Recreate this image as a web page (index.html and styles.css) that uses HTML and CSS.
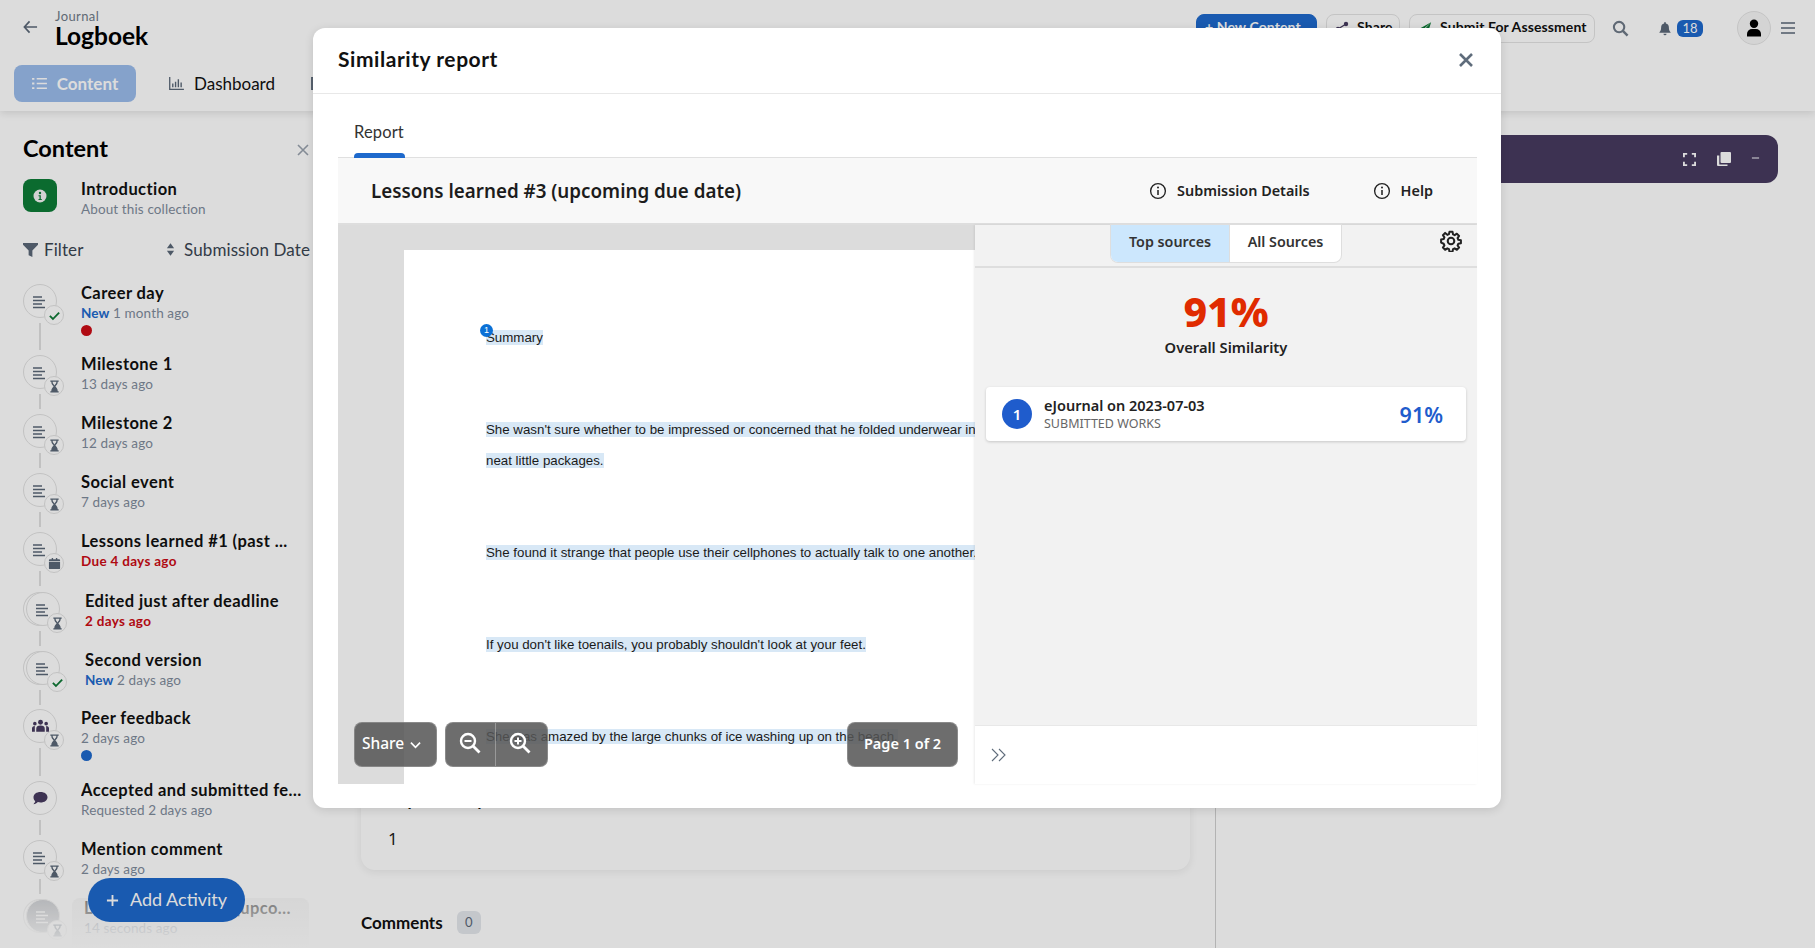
FILE: index.html
```html
<!DOCTYPE html>
<html lang="en">
<head>
<meta charset="utf-8">
<title>Logboek</title>
<link rel="stylesheet" href="styles.css">
</head>
<body>
<svg class="sprite" aria-hidden="true">
  <symbol id="i-lines" viewBox="0 0 14 14"><path d="M1 2h9M1 5.500h12M1 9h9M1 12.500h12" fill="none" stroke="currentColor" stroke-width="1.400"/></symbol>
  <symbol id="i-check" viewBox="0 0 14 14"><path d="M2 7.500l3.300 3.300L12 3.800" fill="none" stroke="currentColor" stroke-width="2"/></symbol>
  <symbol id="i-glass" viewBox="0 0 14 14"><path d="M2.500 .5h9v1.500h-1c0 2.800-1.700 3.800-2.500 5 .8 1.200 2.500 2.200 2.500 5h1v1.500h-9V12h1c0-2.800 1.700-3.800 2.500-5-.8-1.200-2.500-2.200-2.500-5h-1z" fill="currentColor"/><path d="M5 2h4c0 1.800-1.100 2.800-2 3.800C6.100 4.800 5 3.800 5 2z" fill="#fff"/></symbol>
  <symbol id="i-cal" viewBox="0 0 14 14"><path d="M1 5.500h12V12a1 1 0 0 1-1 1H2a1 1 0 0 1-1-1zM2 2.500h2V1h1.500v1.500h3V1H10v1.500h2a1 1 0 0 1 1 1v1H1v-1a1 1 0 0 1 1-1z" fill="currentColor"/></symbol>
  <symbol id="i-info" viewBox="0 0 20 20"><circle cx="10" cy="10" r="8.200" fill="none" stroke="currentColor" stroke-width="1.500"/><circle cx="10" cy="6.200" r="1.100" fill="currentColor"/><path d="M10 9v5.500" stroke="currentColor" stroke-width="1.700"/></symbol>
</svg>

<div class="app">
  <header class="topbar">
    <div class="topbar-row">
      <div class="brand">
        <svg class="back" viewBox="0 0 16 14"><path d="M7 1L1.500 7 7 13M2 7h13" fill="none" stroke="currentColor" stroke-width="1.800"/></svg>
        <div class="brand-text">
          <div class="brand-kicker">Journal</div>
          <div class="brand-name">Logboek</div>
        </div>
      </div>
      <div class="actions">
        <button class="btn btn-primary">+ New Content</button>
        <button class="btn btn-share">
          <svg class="btn-icon" viewBox="0 0 14 14"><circle cx="3" cy="8" r="2.200" fill="#473b5f"/><circle cx="11" cy="3" r="2.200" fill="#473b5f"/><circle cx="11" cy="12" r="2.200" fill="#473b5f"/><path d="M3 8l8-5M3 8l8 4" stroke="#473b5f" stroke-width="1.400"/></svg>
          Share
        </button>
        <button class="btn btn-submit">
          <svg class="btn-icon" viewBox="0 0 16 14"><path d="M15 .5L1 8l4 1.500zM15 .5L6 10v3.500l2.500-3 3 1.200z" fill="#0f7a37"/></svg>
          Submit For Assessment
        </button>
        <svg class="search" viewBox="0 0 18 18"><circle cx="7.500" cy="7.500" r="5.500" fill="none" stroke="currentColor" stroke-width="2.200"/><path d="M11.500 11.500l5 5" stroke="currentColor" stroke-width="2.600"/></svg>
        <div class="notify">
          <svg class="bell" viewBox="0 0 14 16"><path d="M7 .5a1 1 0 0 1 1 1v.6A4.500 4.500 0 0 1 11.500 6.500c0 3.500 1 4.800 2 5.800v.7H.5v-.7c1-1 2-2.300 2-5.800A4.500 4.500 0 0 1 6 2.100v-.6a1 1 0 0 1 1-1zM5.200 14h3.600a1.800 1.800 0 0 1-3.600 0z" fill="currentColor"/></svg>
          <span class="count">18</span>
        </div>
        <div class="avatar">
          <svg viewBox="0 0 16 18"><circle cx="8" cy="4.800" r="4.200" fill="#000"/><path d="M1 17.500v-2.500a5 5 0 0 1 5-5h4a5 5 0 0 1 5 5v2.500z" fill="#000"/></svg>
        </div>
        <svg class="menu" viewBox="0 0 14 14"><path d="M0 2h14M0 7h14M0 12h14" stroke="currentColor" stroke-width="1.600"/></svg>
      </div>
    </div>
    <nav class="tabs">
      <a class="tab tab-active">
        <svg class="tab-icon" viewBox="0 0 16 14"><path d="M5 2h11M5 7h11M5 12h11" stroke="currentColor" stroke-width="1.600"/><path d="M0 1h2.500v2H0zM0 6h2.500v2H0zM0 11h2.500v2H0z" fill="currentColor"/></svg>
        Content
      </a>
      <a class="tab">
        <svg class="tab-icon" viewBox="0 0 16 14"><path d="M.7 0v13.300H16" fill="none" stroke="currentColor" stroke-width="1.400"/><path d="M4 7v4M7 5v6M10 2.500v8.500M13 6v5" stroke="currentColor" stroke-width="1.500"/></svg>
        Dashboard
      </a>
      <a class="tab tab-hidden">
        <svg class="tab-icon" viewBox="0 0 16 14"><path d="M1 0h14v14H1z" fill="none" stroke="currentColor" stroke-width="2"/></svg>
        Settings
      </a>
    </nav>
  </header>

  <div class="workspace">
    <aside class="sidebar">
      <div class="side-head">
        <h2>Content</h2>
        <svg class="side-close" viewBox="0 0 12 12"><path d="M1 1l10 10M11 1L1 11" stroke="currentColor" stroke-width="1.600"/></svg>
      </div>
      <div class="intro">
        <span class="intro-icon">
          <svg viewBox="0 0 14 14"><circle cx="7" cy="7" r="6.500" fill="#f4f4f4"/><circle cx="7" cy="4" r="1.200" fill="#0d7c37"/><path d="M5.500 6.200h2.300v3.700h1v1H5.500v-1h1V7.200h-1z" fill="#0d7c37"/></svg>
        </span>
        <div class="intro-text">
          <div class="title">Introduction</div>
          <div class="sub">About this collection</div>
        </div>
      </div>
      <div class="filters">
        <span class="filter">
          <svg viewBox="0 0 16 16"><path d="M0 1h16v2L10 9v7l-4-2V9L0 3z" fill="currentColor"/></svg>
          Filter
        </span>
        <span class="filter">
          <svg class="sort" viewBox="0 0 10 16"><path d="M5 1l4 5.500H1zM5 15L1 9.500h8z" fill="currentColor"/></svg>
          Submission Date
        </span>
      </div>
      <ul class="items">
        <li class="item">
          <div class="rail"><span class="node"><svg class="node-main"><use href="#i-lines"/></svg><span class="node-badge ok"><svg><use href="#i-check"/></svg></span></span><span class="line"></span></div>
          <div><div class="title">Career day</div><div class="sub"><span class="new">New</span> 1 month ago</div><span class="dot dot-red"></span></div>
        </li>
        <li class="item">
          <div class="rail"><span class="node"><svg class="node-main"><use href="#i-lines"/></svg><span class="node-badge"><svg><use href="#i-glass"/></svg></span></span><span class="line"></span></div>
          <div><div class="title">Milestone 1</div><div class="sub">13 days ago</div></div>
        </li>
        <li class="item">
          <div class="rail"><span class="node"><svg class="node-main"><use href="#i-lines"/></svg><span class="node-badge"><svg><use href="#i-glass"/></svg></span></span><span class="line"></span></div>
          <div><div class="title">Milestone 2</div><div class="sub">12 days ago</div></div>
        </li>
        <li class="item">
          <div class="rail"><span class="node"><svg class="node-main"><use href="#i-lines"/></svg><span class="node-badge"><svg><use href="#i-glass"/></svg></span></span><span class="line"></span></div>
          <div><div class="title">Social event</div><div class="sub">7 days ago</div></div>
        </li>
        <li class="item">
          <div class="rail"><span class="node"><svg class="node-main"><use href="#i-lines"/></svg><span class="node-badge"><svg><use href="#i-cal"/></svg></span></span><span class="line"></span></div>
          <div class="item-body"><div class="title">Lessons learned #1 (past ...</div><div class="sub late">Due 4 days ago</div></div>
        </li>
        <li class="item item-stacked">
          <div class="rail"><span class="node stacked"><svg class="node-main"><use href="#i-lines"/></svg><span class="node-badge"><svg><use href="#i-glass"/></svg></span></span><span class="line"></span></div>
          <div><div class="title">Edited just after deadline</div><div class="sub late">2 days ago</div></div>
        </li>
        <li class="item item-stacked">
          <div class="rail"><span class="node stacked"><svg class="node-main"><use href="#i-lines"/></svg><span class="node-badge ok"><svg><use href="#i-check"/></svg></span></span><span class="line"></span></div>
          <div><div class="title">Second version</div><div class="sub"><span class="new">New</span> 2 days ago</div></div>
        </li>
        <li class="item">
          <div class="rail"><span class="node"><svg class="node-main node-purple" viewBox="0 0 18 14"><circle cx="9" cy="3" r="2.600" fill="currentColor"/><circle cx="3" cy="4.500" r="1.900" fill="currentColor"/><circle cx="15" cy="4.500" r="1.900" fill="currentColor"/><path d="M4.500 13V10a4.500 3.500 0 0 1 9 0v3zM0 11V9.500c0-1.500 1-2.500 3-2.500v6H0zM18 11V9.500C18 8 17 7 15 7v6h3z" fill="currentColor"/></svg><span class="node-badge"><svg><use href="#i-glass"/></svg></span></span><span class="line"></span></div>
          <div><div class="title">Peer feedback</div><div class="sub">2 days ago</div><span class="dot dot-blue"></span></div>
        </li>
        <li class="item">
          <div class="rail"><span class="node"><svg class="node-main node-purple" viewBox="0 0 18 16"><path d="M9 1c4.700 0 8 2.500 8 6s-3.300 6-8 6c-1 0-2-.1-3-.4C4.800 13.800 3 15 1 15c1-1 1.800-2.200 2-3.500C1.700 10.400 1 8.800 1 7c0-3.500 3.300-6 8-6z" fill="currentColor"/></svg></span><span class="line"></span></div>
          <div class="item-body"><div class="title">Accepted and submitted feedback</div><div class="sub">Requested 2 days ago</div></div>
        </li>
        <li class="item">
          <div class="rail"><span class="node"><svg class="node-main"><use href="#i-lines"/></svg><span class="node-badge"><svg><use href="#i-glass"/></svg></span></span><span class="line"></span></div>
          <div><div class="title">Mention comment</div><div class="sub">2 days ago</div></div>
        </li>
        <li class="item item-current">
          <div class="rail"><span class="node node-current stacked"><svg class="node-main"><use href="#i-lines"/></svg><span class="node-badge"><svg><use href="#i-glass"/></svg></span></span></div>
          <div class="item-body"><div class="title">Lessons learned #3 (upcoming due date)</div><div class="sub">14 seconds ago</div></div>
        </li>
      </ul>
      <div class="fade"></div>
      <button class="add-activity"><svg viewBox="0 0 14 14"><path d="M7 1v12M1 7h12" stroke="currentColor" stroke-width="2"/></svg><span class="add-label">Add Activity</span></button>
    </aside>

    <main class="main">
      <section class="card">
        <div class="card-label">Repeat entry</div>
        <div class="card-value">1</div>
      </section>
      <div class="comments">Comments <span class="comments-count">0</span></div>
    </main>

    <aside class="right">
      <div class="purple-bar">
        <svg class="bar-icon" viewBox="0 0 14 14"><path d="M1 4.500V1h3.500M9.500 1H13v3.500M13 9.500V13H9.500M4.500 13H1V9.500" fill="none" stroke="currentColor" stroke-width="2"/></svg>
        <svg class="bar-icon bar-copy" viewBox="0 0 16 16"><path d="M5.500 1H14a1 1 0 0 1 1 1v9a1 1 0 0 1-1 1H5.500a1 1 0 0 1-1-1V2a1 1 0 0 1 1-1z" fill="currentColor"/><path d="M1 4.500h2.300V13.500h8.200V15H2a1 1 0 0 1-1-1z" fill="currentColor"/></svg>
        <svg class="bar-icon bar-minus" viewBox="0 0 10 4"><path d="M1 2h8" stroke="currentColor" stroke-width="2"/></svg>
      </div>
    </aside>
  </div>
</div>

<div class="overlay"></div>

<div class="modal">
  <div class="modal-head">
    <h1>Similarity report</h1>
    <svg class="modal-close" viewBox="0 0 16 16"><path d="M2 2l12 12M14 2L2 14" stroke="currentColor" stroke-width="2.600"/></svg>
  </div>
  <div class="modal-body">
    <div class="modal-tabs"><span class="modal-tab">Report</span></div>
    <div class="report-head">
      <div class="report-title">Lessons learned #3 (upcoming due date)</div>
      <div class="report-links">
        <span class="report-link"><svg><use href="#i-info"/></svg>Submission Details</span>
        <span class="report-link"><svg><use href="#i-info"/></svg>Help</span>
      </div>
    </div>
    <div class="report">
      <div class="viewer">
        <div class="page">
          <p><span class="marker">1</span><span class="hl">Summary</span></p>
          <p><span class="hl">She wasn't sure whether to be impressed or concerned that he folded underwear in</span><br><span class="hl">neat little packages.</span></p>
          <p><span class="hl">She found it strange that people use their cellphones to actually talk to one another.</span></p>
          <p><span class="hl">If you don't like toenails, you probably shouldn't look at your feet.</span></p>
          <p><span class="hl">She was amazed by the large chunks of ice washing up on the beach.</span></p>
        </div>
        <div class="viewer-tools">
          <div class="tool-group">
            <span class="tool tool-share"><span class="tool-text">Share</span>
              <svg viewBox="0 0 12 8"><path d="M1 1.500l5 5 5-5" fill="none" stroke="currentColor" stroke-width="1.800"/></svg>
            </span>
            <span class="tool tool-zoom">
              <span class="zoom-part"><svg viewBox="0 0 22 22"><circle cx="9" cy="9" r="7" fill="none" stroke="currentColor" stroke-width="2.400"/><path d="M14 14l6.500 6.500" stroke="currentColor" stroke-width="2.800"/><path d="M5.500 9h7" stroke="currentColor" stroke-width="2"/></svg></span>
              <span class="zoom-part zoom-split"><svg viewBox="0 0 22 22"><circle cx="9" cy="9" r="7" fill="none" stroke="currentColor" stroke-width="2.400"/><path d="M14 14l6.500 6.500" stroke="currentColor" stroke-width="2.800"/><path d="M5.500 9h7M9 5.500v7" stroke="currentColor" stroke-width="2"/></svg></span>
            </span>
          </div>
          <span class="tool tool-page"><span class="tool-text">Page 1 of 2</span></span>
        </div>
      </div>
      <div class="sources">
        <div class="sources-top">
          <div class="seg">
            <span class="seg-item seg-on">Top sources</span>
            <span class="seg-item">All Sources</span>
          </div>
          <svg class="gear" viewBox="0 0 24 24"><path d="M10.300 2h3.400l.5 2.800 1.800.8 2.400-1.600 2.400 2.400-1.600 2.400.8 1.800 2.800.5v3.400l-2.800.5-.8 1.800 1.600 2.400-2.400 2.400-2.400-1.600-1.800.8-.5 2.800h-3.400l-.5-2.800-1.800-.8-2.400 1.600-2.400-2.400 1.600-2.400-.8-1.800L1.200 13.700v-3.400L4 9.800l.8-1.800-1.600-2.400 2.400-2.400L8 5.300l1.800-.8z" fill="none" stroke="currentColor" stroke-width="2.200" stroke-linejoin="round"/><circle cx="12" cy="12" r="3.600" fill="none" stroke="currentColor" stroke-width="2.200"/></svg>
        </div>
        <div class="sources-main">
          <div class="score">91%</div>
          <div class="score-label">Overall Similarity</div>
          <div class="source-card">
            <span class="source-num">1</span>
            <div class="source-text">
              <div class="source-name">eJournal on 2023-07-03</div>
              <div class="source-type">SUBMITTED WORKS</div>
            </div>
            <span class="source-pct">91%</span>
          </div>
        </div>
        <div class="sources-foot">
          <svg viewBox="0 0 16 14"><path d="M1 1l6 6-6 6M8 1l6 6-6 6" fill="none" stroke="currentColor" stroke-width="1.100"/></svg>
        </div>
      </div>
    </div>
  </div>
</div>
</body>
</html>
```

FILE: styles.css
```css
* { box-sizing: border-box; }
html, body { margin: 0; height: 948px; overflow: hidden; }
body { background: #fff; color: #111; font-family: "Lato", "Noto Sans", sans-serif; position: relative; }
.sprite { display: none; }
svg { display: block; flex: none; }
h1, h2, p, ul { margin: 0; padding: 0; }
button { font: inherit; }

.app { display: flex; flex-direction: column; height: 948px; }

/* Top bar */
.topbar { height: 111px; flex: none; box-shadow: 0 2px 8px rgba(0,0,0,.12); position: relative; z-index: 1; background: #fff; }
.topbar-row { display: flex; justify-content: space-between; align-items: flex-start; height: 65px; padding-left: 23px; padding-right: 20px; }
.brand { display: flex; align-items: center; gap: 17px; padding-top: 8px; }
.back { width: 15px; height: 14px; color: #5b6878; margin-top: -3px; }
.brand-kicker { font-size: 13px; line-height: 16px; color: #6f7a88; letter-spacing: .4px; }
.brand-name { font-size: 24.500px; line-height: 24px; font-weight: 700; color: #000; }
.actions { display: flex; align-items: center; padding-top: 11px; }
.btn { height: 29px; padding: 0 8px 3px; display: flex; align-items: center; gap: 8px; border: 1px solid #e4e4e4; border-radius: 8px; background: #fff; font-size: 14px; font-weight: 700; color: #111; margin-right: 9px; letter-spacing: .1px; white-space: nowrap; }
.btn-primary { background: #1e69cc; border-color: #1e69cc; color: #fff; width: 121px; }
.btn-share { width: 74px; }
.btn-submit { width: 186px; }
.btn-icon { width: 14px; height: 14px; margin-top: 3px; }
.search { width: 17px; height: 17px; color: #6f7a88; margin-left: 8px; }
.notify { display: flex; align-items: center; gap: 6px; margin-left: 30px; }
.bell { width: 12px; height: 15px; color: #5b6878; }
.count { background: #1e69cc; color: #fff; font-size: 13px; line-height: 17px; width: 26px; text-align: center; border-radius: 6px; }
.avatar { width: 34px; height: 34px; border-radius: 50%; border: 1px solid #e4e4e4; display: flex; align-items: center; justify-content: center; margin-left: 34px; background: #f6f6f6; }
.avatar svg { width: 16px; height: 18px; }
.menu { width: 14px; height: 14px; color: #5b6878; margin-left: 10px; }

.tabs { display: flex; padding-left: 14px; gap: 33px; }
.tab { display: flex; align-items: center; gap: 10px; height: 37px; font-size: 17px; color: #111; }
.tab-active { width: 122px; justify-content: center; background: #9bbcec; color: #fff; border-radius: 8px; font-weight: 700; }
.tab-icon { width: 15px; height: 13px; color: #5b6878; }
.tab-active .tab-icon { color: #fff; }
.tab-hidden { margin-left: 3px; }

/* Layout under the bar */
.workspace { flex: 1; display: flex; min-height: 0; }

/* Sidebar */
.sidebar { width: 313px; flex: none; position: relative; overflow: hidden; padding: 22px 0 0 23px; }
.side-head { display: flex; justify-content: space-between; align-items: center; height: 30px; padding-right: 4px; }
.side-head h2 { font-size: 23.500px; line-height: 30px; font-weight: 700; color: #000; }
.side-close { width: 12px; height: 12px; color: #9aa3ae; margin-top: 4px; }
.intro { display: flex; gap: 24px; align-items: flex-start; margin-top: 16px; height: 34px; }
.intro-icon { width: 34px; height: 33px; background: #0d7c37; border-radius: 8px; display: flex; align-items: center; justify-content: center; flex: none; }
.intro-icon svg { width: 14px; height: 14px; }
.title { font-size: 16.500px; line-height: 20px; font-weight: 700; color: #111; white-space: nowrap; overflow: hidden; text-overflow: ellipsis; letter-spacing: .42px; }
.sub { font-size: 13.500px; line-height: 20px; color: #7f8c9c; white-space: nowrap; letter-spacing: .12px; }
.new { color: #1e69cc; font-weight: 700; }
.late { color: #cc0c15; font-weight: 700; letter-spacing: .3px; }
.filters { display: flex; justify-content: space-between; margin-top: 24px; height: 24px; align-items: center; font-size: 17px; color: #3a4552; white-space: nowrap; margin-right: 3px; }
.filter { display: flex; align-items: center; gap: 6px; letter-spacing: .1px; }
.filter svg { width: 15px; height: 15px; color: #5b6878; }
.filter .sort { width: 9px; margin-right: 3px; }
.items { list-style: none; margin-top: 22px; }
.item { display: flex; gap: 24px; min-height: 59px; padding-bottom: 19px; position: relative; }
.item-stacked { gap: 25px; padding-top: 1px; padding-bottom: 18px; }
.rail { display: flex; flex-direction: column; margin-bottom: -17px; flex: none; }
.node { width: 34px; height: 34px; margin-top: 1px; border: 1px solid #e2e2e2; border-radius: 50%; background: #fff; position: relative; display: flex; align-items: center; justify-content: center; color: #5b6878; flex: none; }
.node.stacked { margin-left: 3px; box-shadow: -3px 0 0 -1px #fff, -3px 0 0 0 #e2e2e2; }
.node-main { width: 14px; height: 14px; transform: translate(-1px, 1px); }
.node-purple { width: 17px; height: 14px; color: #473b5f; transform: none; }
.node-badge { position: absolute; left: 20px; top: 20px; width: 20px; height: 20px; border-radius: 50%; background: #fff; border: 1px solid #e2e2e2; display: flex; align-items: center; justify-content: center; color: #5b6878; }
.node-badge svg { width: 13px; height: 13px; }
.node-badge.ok { color: #0f7a37; }
.line { flex: 1; width: 2px; background: #e0e0e0; margin: 5px 0 2px 16px; }
.dot { display: block; width: 11px; height: 11px; border-radius: 50%; margin-top: 2px; margin-bottom: -1px; }
.dot-red { background: #cc0c15; }
.dot-blue { background: #1e69cc; margin-bottom: 0; }
.item-body { width: 222px; min-width: 0; }
.item-current { opacity: .6; }
.item-current .item-body { background: #f4f4f4; padding: 0 12px 30px 12px; margin-left: -12px; width: 237px; border-radius: 8px; }
.node-current { background: #a4a8ae; color: #fff; }
.fade { position: absolute; left: 0; right: 0; bottom: 0; height: 60px; background: linear-gradient(rgba(255,255,255,0), #fff); }
.add-activity { position: absolute; left: 88px; top: 767px; width: 157px; height: 44px; border: 0; border-radius: 22px; background: #1e69cc; color: #fff; font-size: 18px; display: flex; align-items: center; justify-content: center; gap: 11px; }
.add-activity svg { width: 13px; height: 13px; }
.add-label { margin-top: -3px; }

/* Main column */
.main { width: 903px; flex: none; border-right: 1px solid #d0d0d0; padding: 24px 25px 0 48px; display: flex; flex-direction: column; }
.card { height: 735px; border-radius: 14px; background: #fff; box-shadow: 0 2px 8px rgba(0,0,0,.08); padding: 0 31px 19px 27px; display: flex; flex-direction: column; justify-content: flex-end; flex: none; }
.card-label { font-size: 17px; line-height: 22px; margin-bottom: 16px; color: #111; font-weight: 700; }
.card-value { font-size: 17px; line-height: 24px; color: #222; font-family: "Noto Sans", sans-serif; }
.comments { display: flex; align-items: center; gap: 14px; margin-top: 41px; font-size: 17px; font-weight: 700; }
.comments-count { width: 24px; height: 23px; line-height: 23px; text-align: center; font-size: 13px; font-weight: 400; color: #5b6878; background: #e4e7ec; border-radius: 6px; }

/* Right column */
.right { flex: 1; padding: 24px 37px 0 15px; }
.purple-bar { height: 48px; background: #473b5f; border-radius: 0 12px 12px 0; display: flex; align-items: center; justify-content: flex-end; padding-right: 18px; color: #fff; }
.bar-icon { width: 13px; height: 13px; margin-left: 20px; }
.bar-copy { width: 16px; height: 16px; }
.bar-minus { width: 9px; height: 4px; margin-left: 19px; opacity: .55; margin-top: -2px; }

/* Backdrop */
.overlay { position: absolute; inset: 0; background: rgba(0,0,0,.137); z-index: 5; }

/* Modal */
.modal { position: absolute; left: 313px; top: 28px; width: 1188px; height: 780px; background: #fff; border-radius: 12px; box-shadow: 0 2px 10px rgba(0,0,0,.12); z-index: 6; display: flex; flex-direction: column; font-family: "Noto Sans", sans-serif; }
.modal-head { height: 66px; flex: none; display: flex; align-items: center; justify-content: space-between; padding: 0 27px 0 25px; border-bottom: 1px solid #e8e8e8; font-family: "Lato", sans-serif; }
.modal-head h1 { font-size: 21px; font-weight: 700; color: #111; margin-top: -5px; letter-spacing: .55px; }
.modal-close { width: 16px; height: 16px; color: #5f6c7b; margin-top: -1px; }
.modal-body { flex: 1; padding: 0 24px 24px 25px; display: flex; flex-direction: column; min-height: 0; }
.modal-tabs { height: 64px; flex: none; padding-left: 16px; border-bottom: 1px solid #e0e0e0; font-family: "Lato", sans-serif; }
.modal-tab { display: block; height: 64px; width: 51px; font-size: 16.500px; line-height: 76px; color: #333; position: relative; white-space: nowrap; letter-spacing: .15px; }
.modal-tab::after { content: ""; position: absolute; left: 0; right: 0; bottom: 0; height: 5px; background: #1e69cc; border-radius: 4px 4px 0 0; }
.report-head { height: 67px; flex: none; background: #f8f8f8; border-bottom: 2px solid #dedede; display: flex; align-items: center; justify-content: space-between; padding: 0 44px 0 33px; }
.report-title { font-size: 18.800px; font-weight: 600; color: #1c1c1c; }
.report-links { display: flex; gap: 63px; }
.report-link { display: flex; align-items: center; gap: 10px; font-size: 14.400px; font-weight: 600; color: #222; }
.report-link svg { width: 18px; height: 18px; color: #222; }
.report { flex: 1; display: flex; min-height: 0; }

.viewer { width: 637px; flex: none; background: #dcdcdc; position: relative; overflow: hidden; padding: 25px 0 0 66px; }
.page { width: 800px; height: 700px; background: #fff; padding: 73px 0 0 82px; font-family: "Liberation Sans", Arial, sans-serif; font-size: 13.300px; line-height: 30.500px; color: #1a1a1a; white-space: nowrap; }
.page p { margin-bottom: 61.500px; position: relative; }
.hl { background: #d8e8f6; }
.marker { position: absolute; left: -6px; top: 1px; width: 13px; height: 13px; border-radius: 50%; background: #0a70d6; color: #fff; font-size: 9px; line-height: 13px; text-align: center; z-index: 1; }
.viewer-tools { position: absolute; left: 16px; right: 17px; bottom: 17px; display: flex; justify-content: space-between; }
.tool-group { display: flex; gap: 8px; }
.tool { height: 45px; background: rgba(85,85,85,.86); border: 1px solid rgba(255,255,255,.2); border-radius: 8px; color: #fff; display: flex; align-items: center; font-weight: 600; }
.tool-text { margin-top: -3px; }
.tool-share { width: 83px; padding-left: 7px; gap: 6px; font-size: 15.500px; font-weight: 500; }
.tool-share svg { width: 11px; height: 8px; margin-top: 1px; }
.tool-zoom { width: 103px; }
.zoom-part { flex: 1; height: 100%; display: flex; align-items: center; justify-content: center; padding-bottom: 3px; }
.zoom-part svg { width: 22px; height: 22px; }
.zoom-split { border-left: 1px solid rgba(255,255,255,.3); padding-right: 3px; }
.tool-page { width: 111px; justify-content: center; font-size: 14.500px; }

.sources { flex: 1; display: flex; flex-direction: column; box-shadow: -1px 0 2px rgba(0,0,0,.08); position: relative; min-width: 0; }
.sources-top { height: 43px; flex: none; background: #f2f2f2; border-bottom: 2px solid #dedede; display: grid; grid-template-columns: 1fr auto 1fr; align-items: start; }
.seg { grid-column: 2; display: flex; height: 37px; border-radius: 0 0 7px 7px; overflow: hidden; box-shadow: 0 0 0 1px #dedede; background: #fff; font-size: 14.300px; font-weight: 600; color: #333; }
.seg-item { display: flex; align-items: center; justify-content: center; width: 111px; padding-bottom: 5px; }
.seg-on { width: 119px; background: #cce7fd; border-right: 1px solid #dedede; }
.gear { grid-column: 3; justify-self: end; margin: 5px 15px 0 0; width: 22px; height: 22px; color: #222; }
.sources-main { flex: 1; background: #f2f2f2; padding: 13px 11px 0 11px; border-bottom: 1px solid #e8e8e8; text-align: center; }
.score { font-size: 41px; line-height: 60px; font-weight: 800; color: #e02b00; }
.score-label { font-size: 14.700px; line-height: 20px; font-weight: 600; color: #222; margin-top: -4px; }
.source-card { margin-top: 30px; height: 54px; background: #fff; border-radius: 4px; box-shadow: 0 1px 3px rgba(0,0,0,.18); display: flex; align-items: center; padding: 0 23px 0 16px; text-align: left; }
.source-num { width: 30px; height: 30px; border-radius: 50%; background: #1f5ccc; color: #fff; font-size: 15px; font-weight: 600; line-height: 30px; text-align: center; flex: none; margin-right: 12px; }
.source-text { flex: 1; }
.source-name { font-size: 14.500px; line-height: 20px; font-weight: 600; color: #222; margin-top: -2px; }
.source-type { font-size: 12.500px; line-height: 17px; color: #666; }
.source-pct { font-size: 21.500px; font-weight: 600; color: #1f5ccc; }
.sources-foot { height: 58px; flex: none; display: flex; align-items: center; padding-left: 16px; color: #5f6c7b; }
.sources-foot svg { width: 16px; height: 14px; }
```
